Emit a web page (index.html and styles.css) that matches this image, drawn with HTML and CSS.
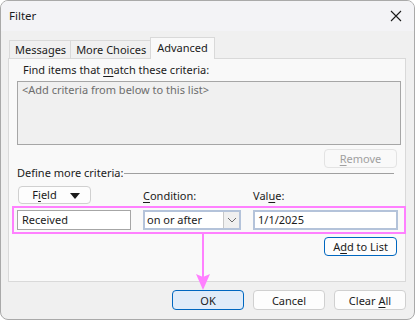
FILE: index.html
```html
<!DOCTYPE html>
<html>
<head>
<meta charset="utf-8">
<link rel="stylesheet" href="styles.css">
</head>
<body>
<div class="window">
  <div class="titlebar">
    <span class="title">Filter</span>
    <svg class="close" width="12" height="12" viewBox="0 0 12 12"><path d="M1 1 L11 11 M11 1 L1 11" stroke="#1b1b1b" stroke-width="1.1" fill="none"/></svg>
  </div>
  <div class="body">
    <div class="tabs">
      <div class="tab">Messages</div>
      <div class="tab">More Choices</div>
      <div class="tab active">Advanced</div>
    </div>
    <div class="panel">
      <div class="find">Find items that <u>m</u>atch these criteria:</div>
      <div class="listbox">&lt;Add criteria from below to this list&gt;</div>
      <div class="remove-row"><button class="btn disabled"><u>R</u>emove</button></div>
      <div class="define"><span>Define more criteria:</span><span class="rule"></span></div>
      <div class="grid head">
        <button class="btn field"><span>F<u>i</u>eld</span><svg width="10" height="6" viewBox="0 0 10 6"><path d="M0 0 H10 L5 6 Z" fill="#1b1b1b"/></svg></button>
        <span class="lbl"><u>C</u>ondition:</span>
        <span class="lbl">Val<u>u</u>e:</span>
      </div>
      <div class="grid inputs">
        <div class="input">Received</div>
        <div class="combo"><span class="combo-text">on or after</span><span class="drop"><svg width="10" height="6" viewBox="0 0 10 6"><path d="M1 1 L5 5 L9 1" stroke="#6a6a6a" stroke-width="1" fill="none"/></svg></span></div>
        <div class="input focus">1/1/2025</div>
      </div>
      <div class="add-row"><button class="btn blue">A<u>d</u>d to List</button></div>
    </div>
    <div class="footer">
      <button class="btn ok">OK</button>
      <button class="btn">Cancel</button>
      <button class="btn">Clear <u>A</u>ll</button>
    </div>
  </div>
  <div class="arrow"><span class="shaft"></span><svg class="head-tri" width="14" height="16" viewBox="0 0 14 16"><path d="M0 0 L7 3 L14 0 L7 16 Z" fill="#ff80ff"/></svg></div>
</div>
</body>
</html>
```
FILE: styles.css
```css
html, body {
  margin: 0;
  padding: 0;
  background: #ffffff;
}
body {
  font-family: "Noto Sans", "Open Sans", sans-serif;
  font-size: 11px;
  color: #1b1b1b;
}
u { text-decoration-thickness: 1px; text-underline-offset: 2px; }
.window {
  position: relative;
  box-sizing: border-box;
  width: 415px;
  height: 320px;
  border: 1px solid #a9a9a9;
  border-radius: 8px;
  overflow: hidden;
  background: #f0f0f0;
}
.titlebar {
  height: 30px;
  background: #f3f3f6;
  display: flex;
  align-items: center;
  justify-content: space-between;
  padding: 0 12px 0 8px;
}
.title { font-size: 11.5px; line-height: 16px; }
.close { display: block; }
.body {
  padding: 6px 8px 0 7px;
}
.tabs {
  display: flex;
  align-items: flex-end;
  height: 21px;
  padding-left: 1px;
  position: relative;
  z-index: 1;
}
.tab {
  box-sizing: border-box;
  height: 18px;
  line-height: 17px;
  padding: 0 4px 0 5px;
  border: 1px solid #d9d9d9;
  border-bottom: none;
  margin-right: -1px;
  background: #f0f0f0;
}
.tab.active {
  height: 22px;
  margin-bottom: -1px;
  background: #f9f9f9;
  padding: 0 6px 0 6px;
  line-height: 19px;
}
.panel {
  box-sizing: border-box;
  border: 1px solid #d9d9d9;
  background: #f9f9f9;
  padding: 3px 4px 25px 8px;
  height: 224px;
}
.find {
  line-height: 16px;
  padding-left: 6px;
}
.listbox {
  box-sizing: border-box;
  margin-top: 3px;
  height: 64px;
  border: 1px solid #a6a6a6;
  background: #f0f0f0;
  color: #6d6d6d;
  padding: 1px 4px;
  line-height: 14px;
}
.remove-row {
  display: flex;
  justify-content: flex-end;
  margin-top: 4px;
  padding-right: 4px;
}
.btn {
  box-sizing: border-box;
  font-family: inherit;
  font-size: 11px;
  color: #1b1b1b;
  background: #fdfdfd;
  border: 1px solid #d0d0d0;
  border-radius: 4px;
  width: 73px;
  height: 19px;
  padding: 0;
  line-height: 16px;
}
.btn.disabled {
  background: #f9f9f9;
  border-color: #e3e3e3;
  color: #a0a0a0;
}
.define {
  display: flex;
  align-items: center;
  margin-top: -2px;
  line-height: 14px;
  height: 14px;
  padding-right: 7px;
}
.rule {
  flex: 1;
  height: 1px;
  background: #a0a0a0;
  margin-left: 1px;
  margin-top: 1px;
}
.grid {
  display: grid;
  grid-template-columns: 114px 98px 145px;
  column-gap: 12px;
}
.head {
  margin-top: 6px;
  align-items: end;
  height: 18px;
}
.field {
  margin-left: 1px;
  height: 18px;
  width: 73px;
  display: flex;
  align-items: center;
  justify-content: center;
  gap: 13px;
  padding-left: 3px;
}
.field svg { display: block; margin-top: 1px; }
.lbl {
  line-height: 14px;
  margin-bottom: 1px;
}
.inputs {
  margin-top: 6px;
  position: relative;
}
.inputs::after {
  content: "";
  position: absolute;
  left: -5px;
  top: -4px;
  right: -5px;
  bottom: -4px;
  border: 2px solid #ff80ff;
}
.input {
  box-sizing: border-box;
  height: 20px;
  border: 1px solid #a6a6a6;
  background: #ffffff;
  line-height: 18px;
  padding-left: 4px;
}
.input.focus {
  border: 2px solid #b4c3da;
  line-height: 16px;
  padding-left: 3px;
}
.combo {
  box-sizing: border-box;
  height: 20px;
  border: 2px solid #b4c3da;
  background: #ffffff;
  display: flex;
  align-items: stretch;
}
.combo-text {
  flex: 1;
  line-height: 16px;
  padding-left: 2px;
}
.drop {
  width: 15px;
  background: #f0f0f0;
  border-left: 1px solid #c8c8c8;
  display: flex;
  align-items: center;
  justify-content: center;
}
.drop svg { display: block; }
.add-row {
  display: flex;
  justify-content: flex-end;
  margin-top: 7px;
  padding-right: 4px;
}
.btn.blue {
  border-color: #0067c0;
}
.footer {
  display: flex;
  justify-content: flex-end;
  gap: 9px;
  margin-top: 8px;
}
.footer .btn {
  width: 72px;
  height: 20px;
  line-height: 17px;
}
.footer .btn.ok {
  background: #e0ecf9;
  border-color: #0067c0;
}
.arrow {
  position: absolute;
  left: 195px;
  top: 233px;
  width: 14px;
  height: 56px;
}
.shaft {
  position: absolute;
  left: 6px;
  top: 0;
  width: 2px;
  height: 44px;
  background: #ff80ff;
}
.head-tri {
  position: absolute;
  left: 0;
  bottom: 0;
  display: block;
}
```
